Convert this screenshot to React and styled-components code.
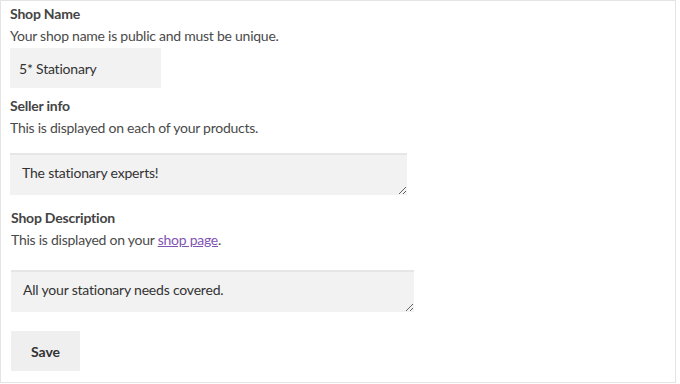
import React from 'react'
import styled, { createGlobalStyle } from 'styled-components'

const GlobalStyle = createGlobalStyle`
  html, body {
    margin: 0;
    padding: 0;
    background: #fff;
  }
  body {
    font-family: Lato, "Noto Sans", sans-serif;
    color: #444;
  }
`

const Frame = styled.form`
  box-sizing: border-box;
  width: 676px;
  height: 383px;
  border: 1px solid #e4e4e4;
  padding: 4px 9px 0 9px;
  display: flex;
  flex-direction: column;
`

const Field = styled.div`
  display: flex;
  flex-direction: column;
  padding-left: ${(p) => p.indent || 0}px;
  margin-bottom: ${(p) => p.gap || 0}px;
`

const Label = styled.label`
  font-size: 14px;
  font-weight: 700;
  line-height: 18px;
  letter-spacing: -0.2px;
  color: #444;
`

const Hint = styled.p`
  margin: 4px 0 0;
  font-size: 14px;
  line-height: 18px;
  letter-spacing: -0.25px;
  color: #4a4a4a;

  a {
    color: #7f54b3;
    text-decoration: underline;
  }
`

const TextInput = styled.input`
  box-sizing: border-box;
  width: 151px;
  height: 40px;
  margin-top: 3px;
  border: none;
  background: #f2f2f2;
  padding: 0 9px;
  font-family: Lato, "Noto Sans", sans-serif;
  font-size: 14px;
  letter-spacing: -0.2px;
  color: #333;
  outline: none;
`

const TextArea = styled.textarea`
  box-sizing: border-box;
  width: ${(p) => p.w}px;
  height: 42px;
  margin-top: ${(p) => p.top}px;
  border: none;
  border-top: 2px solid #e6e6e6;
  background: #f2f2f2;
  padding: 9px 12px;
  font-family: Lato, "Noto Sans", sans-serif;
  font-size: 14px;
  line-height: 18px;
  letter-spacing: -0.2px;
  color: #333;
  outline: none;
  resize: vertical;
`

const SaveButton = styled.button`
  width: 69px;
  height: 40px;
  margin-left: 1px;
  border: none;
  background: #efefef;
  font-family: Lato, "Noto Sans", sans-serif;
  font-size: 14px;
  font-weight: 700;
  color: #333;
  cursor: pointer;
`

export default function App() {
  return (
    <>
      <GlobalStyle />
      <Frame onSubmit={(e) => e.preventDefault()}>
        <Field gap={9}>
          <Label htmlFor="shop-name">Shop Name</Label>
          <Hint>Your shop name is public and must be unique.</Hint>
          <TextInput id="shop-name" type="text" defaultValue="5* Stationary" />
        </Field>
        <Field gap={14}>
          <Label htmlFor="seller-info">Seller info</Label>
          <Hint>This is displayed on each of your products.</Hint>
          <TextArea id="seller-info" w={397} top={16} defaultValue="The stationary experts!" />
        </Field>
        <Field indent={1} gap={19}>
          <Label htmlFor="shop-desc">Shop Description</Label>
          <Hint>
            This is displayed on your <a href="#">shop page</a>.
          </Hint>
          <TextArea id="shop-desc" w={403} top={21} defaultValue="All your stationary needs covered." />
        </Field>
        <div>
          <SaveButton type="submit">Save</SaveButton>
        </div>
      </Frame>
    </>
  )
}
